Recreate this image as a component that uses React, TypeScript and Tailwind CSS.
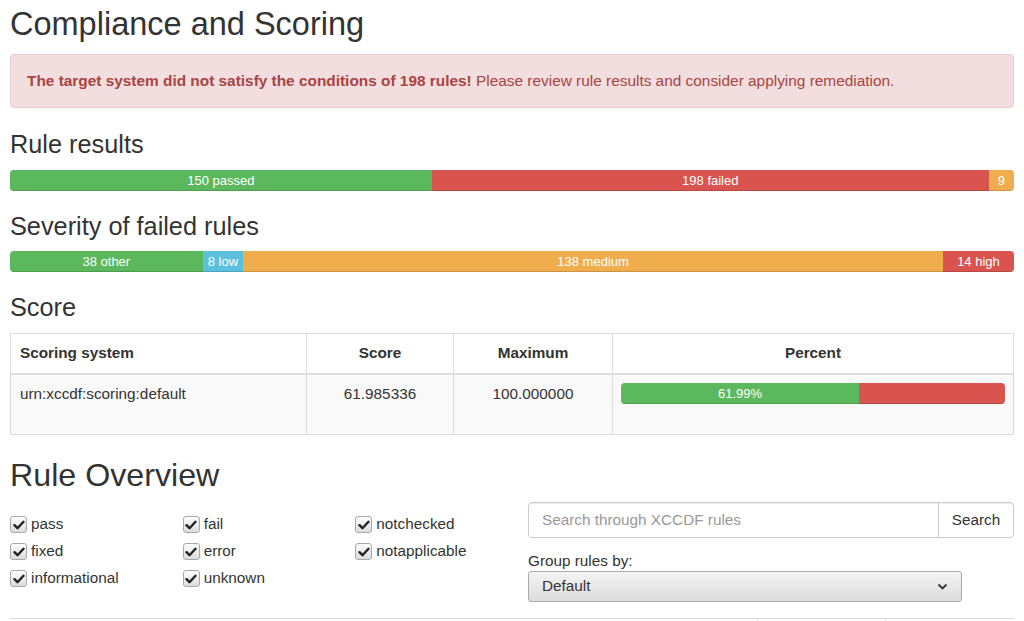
import React from "react";

const font = { fontFamily: '"Liberation Sans", Arial, sans-serif' };

function Bar({ parts }: { parts: { label: string; pct: number; color: string }[] }) {
  return (
    <div className="flex h-[21px] w-full overflow-hidden rounded-[4px] bg-[#f5f5f5] shadow-[inset_0_1px_2px_rgba(0,0,0,0.1)]">
      {parts.map((p, i) => (
        <div
          key={i}
          className={`${p.color} flex h-full items-center justify-center text-[13px] leading-[21px] text-white shadow-[inset_0_-1px_0_rgba(0,0,0,0.15)]`}
          style={{ width: `${p.pct}%` }}
        >
          {p.label}
        </div>
      ))}
    </div>
  );
}

function Check({ label }: { label: string }) {
  return (
    <label className="flex h-[27px] items-center gap-[4px] text-[15.3px] text-[#333]">
      <span className="flex h-[17px] w-[17px] items-center justify-center rounded-[3px] border border-[#a9a9a9] bg-gradient-to-b from-[#fdfdfd] to-[#dcdcdc]">
        <svg width="12" height="10" viewBox="0 0 12 10">
          <path d="M1.5 5.2 L4.5 8.2 L10.5 1.8" fill="none" stroke="#222" strokeWidth="2.4" strokeLinecap="round" strokeLinejoin="round" />
        </svg>
      </span>
      {label}
    </label>
  );
}

export default function App() {
  return (
    <div className="min-h-screen bg-white px-[10px] text-[#333]" style={font}>
      {/* Compliance */}
      <h2 className="pt-[6px] text-[32.5px] leading-[36px] text-[#333]">Compliance and Scoring</h2>
      <div className="mt-[12px] flex h-[54px] items-center rounded-[4px] border border-[#ebccd1] bg-[#f2dede] px-[16px] text-[15.4px] text-[#a94442]">
        <span>
          <strong>The target system did not satisfy the conditions of 198 rules!</strong> Please review rule results and consider applying remediation.
        </span>
      </div>

      <h3 className="mt-[21px] text-[25.3px] leading-[30px]">Rule results</h3>
      <div className="mt-[11px]">
        <Bar
          parts={[
            { label: "150 passed", pct: 42.02, color: "bg-[#5cb85c]" },
            { label: "198 failed", pct: 55.46, color: "bg-[#d9534f]" },
            { label: "9", pct: 2.52, color: "bg-[#f0ad4e]" },
          ]}
        />
      </div>

      <h3 className="mt-[20px] text-[25.3px] leading-[30px]">Severity of failed rules</h3>
      <div className="mt-[10px]">
        <Bar
          parts={[
            { label: "38 other", pct: 19.19, color: "bg-[#5cb85c]" },
            { label: "8 low", pct: 4.04, color: "bg-[#5bc0de]" },
            { label: "138 medium", pct: 69.7, color: "bg-[#f0ad4e]" },
            { label: "14 high", pct: 7.07, color: "bg-[#d9534f]" },
          ]}
        />
      </div>

      <h3 className="mt-[20px] text-[25.3px] leading-[30px]">Score</h3>
      <table className="mt-[11px] w-full border-collapse border border-[#ddd] text-[15.3px]">
        <thead>
          <tr className="h-[40px]">
            <th className="w-[296px] border border-[#ddd] border-b-2 px-[9px] text-left font-bold">Scoring system</th>
            <th className="w-[147px] border border-[#ddd] border-b-2 px-[9px] text-center font-bold">Score</th>
            <th className="w-[159px] border border-[#ddd] border-b-2 px-[9px] text-center font-bold">Maximum</th>
            <th className="border border-[#ddd] border-b-2 px-[9px] text-center font-bold">Percent</th>
          </tr>
        </thead>
        <tbody>
          <tr className="h-[61px] bg-[#f9f9f9] align-top">
            <td className="border border-[#ddd] px-[9px] pt-[8px]">urn:xccdf:scoring:default</td>
            <td className="border border-[#ddd] px-[9px] pt-[8px] text-center">61.985336</td>
            <td className="border border-[#ddd] px-[9px] pt-[8px] text-center">100.000000</td>
            <td className="border border-[#ddd] px-[8px] pt-[8px]">
              <Bar
                parts={[
                  { label: "61.99%", pct: 61.99, color: "bg-[#5cb85c]" },
                  { label: "", pct: 38.01, color: "bg-[#d9534f]" },
                ]}
              />
            </td>
          </tr>
        </tbody>
      </table>

      <h2 className="mt-[21px] text-[32.2px] leading-[38px]">Rule Overview</h2>

      <div className="mt-[8px] flex">
        <div className="grid w-[518px] grid-cols-3 content-start pt-[9px]">
          <Check label="pass" />
          <Check label="fail" />
          <Check label="notchecked" />
          <Check label="fixed" />
          <Check label="error" />
          <Check label="notapplicable" />
          <Check label="informational" />
          <Check label="unknown" />
        </div>
        <div className="flex-1">
          <div className="flex h-[36px] rounded-[4px] border border-[#ccc] shadow-[inset_0_1px_1px_rgba(0,0,0,0.075)]">
            <div className="flex flex-1 items-center px-[13px] text-[15.3px] text-[#999]">Search through XCCDF rules</div>
            <div className="flex w-[75px] items-center justify-center border-l border-[#ccc] text-[15.3px] text-[#333]">Search</div>
          </div>
          <div className="mt-[14px] text-[15.3px] leading-[18px]">Group rules by:</div>
          <div className="mt-[1px] flex h-[31px] w-[434px] items-center justify-between rounded-[3px] border border-[#aaa] bg-gradient-to-b from-[#f4f4f4] to-[#dcdcdc] px-[13px] text-[15.3px]">
            <span>Default</span>
            <svg width="11" height="7" viewBox="0 0 11 7">
              <path d="M1.5 1.5 L5.5 5.5 L9.5 1.5" fill="none" stroke="#333" strokeWidth="1.8" />
            </svg>
          </div>
        </div>
      </div>

      <div className="mt-[16px] flex h-[4px] border-t border-[#ddd]">
        <div className="w-[747px]" />
        <div className="w-[128px] border-l border-[#ddd]" />
        <div className="border-l border-[#ddd]" />
      </div>
    </div>
  );
}
